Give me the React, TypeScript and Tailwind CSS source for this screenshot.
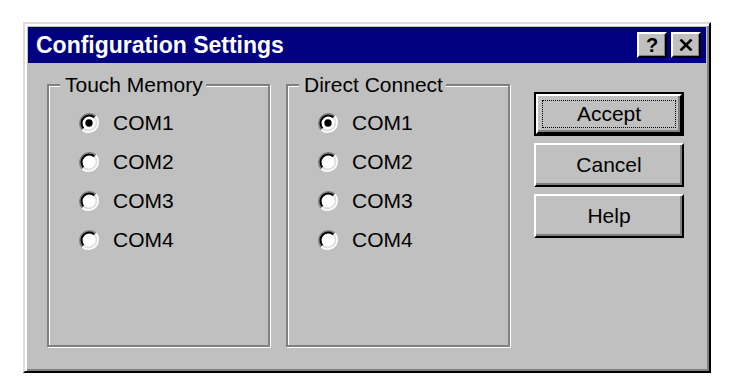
import React from "react";

function Radio({ checked }: { checked?: boolean }) {
  return (
    <svg width="22" height="22" viewBox="0 0 24 24" className="shrink-0">
      <circle cx="12" cy="12" r="9" fill="#fff" />
      <path d="M4.6 19.4 A10.5 10.5 0 0 1 19.4 4.6" fill="none" stroke="#808080" strokeWidth="2" />
      <path d="M19.4 4.6 A10.5 10.5 0 0 1 4.6 19.4" fill="none" stroke="#fff" strokeWidth="2" />
      <path d="M6 18 A8.5 8.5 0 0 1 18 6" fill="none" stroke="#000" strokeWidth="2.2" />
      <path d="M18 6 A8.5 8.5 0 0 1 6 18" fill="none" stroke="#dfdfdf" strokeWidth="2" />
      {checked && <circle cx="12" cy="12" r="4" fill="#000" />}
    </svg>
  );
}

function Group({ title, className }: { title: string; className?: string }) {
  const ports = ["COM1", "COM2", "COM3", "COM4"];
  return (
    <fieldset
      className={
        "h-[274px] border-2 border-[#808080] shadow-[inset_1px_1px_0_#fff,1px_1px_0_#fff] " +
        (className ?? "")
      }
    >
      <legend className="ml-[11px] pl-[5px] pr-[3px] leading-6 text-[21px] bg-[#c0c0c0]">
        {title}
      </legend>
      <div className="flex flex-col pl-[29px] pt-[6px]">
        {ports.map((p, i) => (
          <label key={p} className="flex h-[39px] items-center gap-[13px] text-[21px]">
            <Radio checked={i === 0} />
            <span>{p}</span>
          </label>
        ))}
      </div>
    </fieldset>
  );
}

function Button({ label, isDefault }: { label: string; isDefault?: boolean }) {
  if (isDefault) {
    return (
      <div className="h-[44px] border-2 border-black">
        <div className="flex h-full border-2 border-t-white border-l-white border-r-black border-b-black p-[4px] shadow-[inset_-2px_-2px_0_#808080]">
          <span className="flex flex-1 items-center justify-center border border-dotted border-black text-[21px]">
            {label}
          </span>
        </div>
      </div>
    );
  }
  return (
    <div className="flex h-[44px] items-center justify-center border-2 border-t-white border-l-white border-r-black border-b-black shadow-[inset_-2px_-2px_0_#808080] text-[21px]">
      {label}
    </div>
  );
}

function TitleButton({ children }: { children: React.ReactNode }) {
  return (
    <div className="flex h-[26px] w-[30px] items-center justify-center bg-[#c0c0c0] border-2 border-t-white border-l-white border-r-black border-b-black shadow-[inset_-1px_-1px_0_#808080]">
      {children}
    </div>
  );
}

export default function App() {
  return (
    <div
      className="min-h-screen bg-white pl-[23px] pt-[22px] text-black"
      style={{ fontFamily: '"Liberation Sans", Arial, sans-serif' }}
    >
      <div className="flex h-[351px] w-[688px] flex-col border-2 border-t-[#dcdcdc] border-l-[#dcdcdc] border-r-black border-b-black bg-[#c0c0c0] p-[3px] shadow-[inset_2px_2px_0_#fff,inset_-2px_-2px_0_#808080]">
        <div className="flex h-[36px] items-center bg-[#000080] pl-[8px] pr-[5px]">
          <span className="flex-1 text-[23px] font-bold leading-none text-white">
            Configuration Settings
          </span>
          <div className="flex gap-[4px]">
            <TitleButton>
              <span className="text-[20px] font-bold leading-none">?</span>
            </TitleButton>
            <TitleButton>
              <svg width="14" height="12" viewBox="0 0 14 12">
                <path d="M1.5 0.5 L12.5 11.5 M12.5 0.5 L1.5 11.5" stroke="#000" strokeWidth="2.6" />
              </svg>
            </TitleButton>
          </div>
        </div>
        <div className="flex flex-1 pl-[19px] pr-[21px] pt-[10px]">
          <Group title="Touch Memory" className="w-[223px]" />
          <Group title="Direct Connect" className="ml-[16px] w-[224px]" />
          <div className="ml-[24px] flex w-[150px] flex-col gap-[7px] pt-[19px]">
            <Button label="Accept" isDefault />
            <Button label="Cancel" />
            <Button label="Help" />
          </div>
        </div>
      </div>
    </div>
  );
}
